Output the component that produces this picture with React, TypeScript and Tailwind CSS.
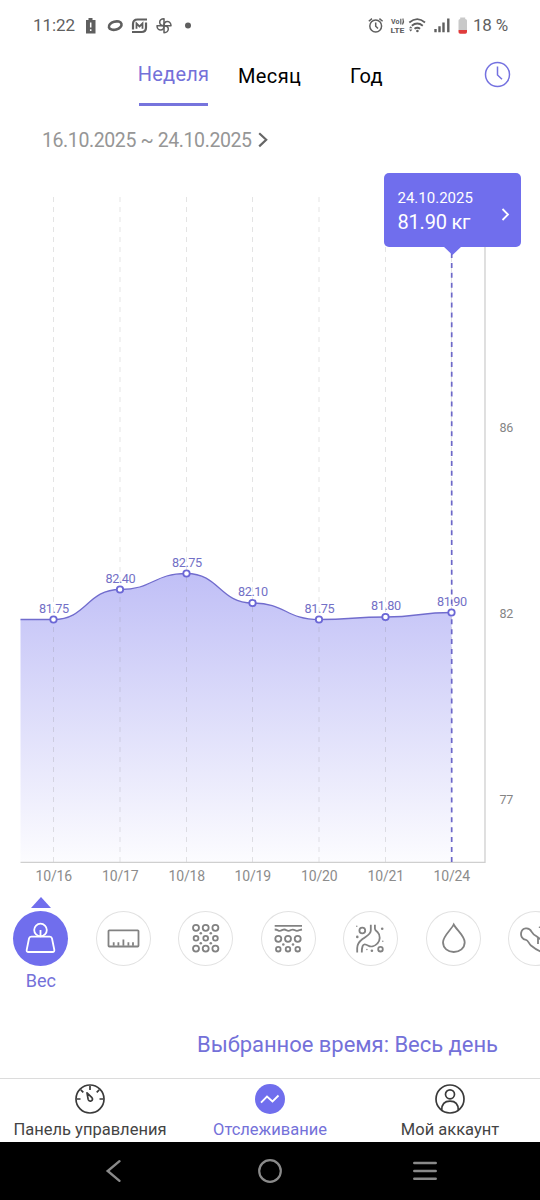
import { ReactNode } from "react";
import clsx from "clsx";

interface Point {
  x: number;
  y: number;
  value: string;
  date: string;
}

const points: Point[] = [
  { x: 53.5, y: 619.5, value: "81.75", date: "10/16" },
  { x: 120, y: 589.5, value: "82.40", date: "10/17" },
  { x: 186.5, y: 573.5, value: "82.75", date: "10/18" },
  { x: 252.5, y: 603, value: "82.10", date: "10/19" },
  { x: 319, y: 619.5, value: "81.75", date: "10/20" },
  { x: 385.5, y: 617, value: "81.80", date: "10/21" },
  { x: 451.5, y: 612.5, value: "81.90", date: "10/24" },
];

const scale = [
  { y: 427, label: "86" },
  { y: 613, label: "82" },
  { y: 799, label: "77" },
];

const CHART_LEFT = 20.5;
const CHART_BOTTOM = 862;

function buildLine() {
  let d = `M${CHART_LEFT} ${points[0].y} L${points[0].x} ${points[0].y}`;
  for (let i = 1; i < points.length; i++) {
    const a = points[i - 1];
    const b = points[i];
    const mid = (a.x + b.x) / 2;
    d += ` C${mid} ${a.y} ${mid} ${b.y} ${b.x} ${b.y}`;
  }
  return d;
}

function StatusBar() {
  return (
    <div className="flex h-[50px] shrink-0 items-center justify-between pl-[33px] pr-[32px] pt-[2px] text-[#5f5f5f]">
      <div className="flex items-center">
        <span className="w-[52px] text-[17px] tracking-[-0.1px]">11:22</span>
        <svg className="h-[18px] w-[112px]" viewBox="85 17 112 18" fill="none">
          {/* battery alert */}
          <path d="M86 20h2.500v-2h4v2H95.500v13.500H86z" fill="#5f5f5f" />
          <path d="M90.700 22.500v5M90.700 29.300v1.800" stroke="#fff" strokeWidth="1.500" />
          {/* ring */}
          <ellipse cx="115.200" cy="25.600" rx="6.500" ry="4" transform="rotate(-16 115.200 25.600)" stroke="#5f5f5f" strokeWidth="2.600" />
          {/* M badge */}
          <path d="M133 29.500v-5.500q0-4.500 4.500-4.500h9.500M146 22.500v5q0 4.500-4.500 4.500h-9.500" stroke="#5f5f5f" strokeWidth="2.200" />
          <path d="M136.500 28.800v-5.300l3 3 3-3v5.300" stroke="#5f5f5f" strokeWidth="1.800" />
          {/* pinwheel */}
          <g stroke="#5f5f5f" strokeWidth="1.500" strokeLinejoin="round">
            {[0, 90, 180, 270].map((r) => (
              <path
                key={r}
                transform={`rotate(${r} 164 25.700)`}
                d="M164 25.700v-7c-3 0-4.300 2-4.300 3.600 0 2 1.500 3.400 4.300 3.400z"
              />
            ))}
          </g>
          <circle cx="188" cy="25.600" r="3" fill="#5f5f5f" />
        </svg>
      </div>
      <div className="flex items-center gap-[5px]">
        <svg className="h-[20px] w-[100px]" viewBox="368 16 100 20" fill="none" stroke="#5f5f5f">
          {/* alarm */}
          <circle cx="375.700" cy="26" r="5.900" strokeWidth="1.500" />
          <path d="M375.700 22.500v3.700l2.300 2.300M368.800 21.300l3.200-2.700M382.600 21.300l-3.200-2.700" strokeWidth="1.500" />
          <g fill="#5f5f5f" stroke="none" fontFamily="Roboto" fontWeight="700">
            <text x="391" y="24.300" fontSize="7" textLength="8.500" lengthAdjust="spacingAndGlyphs">Vo</text>
            <text x="390.500" y="32.700" fontSize="7.500" textLength="14" lengthAdjust="spacingAndGlyphs">LTE</text>
          </g>
          <path d="M400.800 18.800v5.600M402.800 18.500q1.500 3-.3 6" strokeWidth="1.200" />
          {/* wifi */}
          <path d="M409.300 22.500q8-6.700 15.700 0M411.800 25.800q5.400-4.500 11 0M414.500 28.800q2.800-2.200 5.600 0" strokeWidth="1.800" />
          <circle cx="417.400" cy="31" r="1.300" fill="#5f5f5f" stroke="none" />
          <path d="M409 28.200l1.700-2 1.700 2zM409 29.500l1.700 2 1.700-2z" fill="#5f5f5f" stroke="none" />
          {/* signal */}
          <path d="M435.500 29v3.200M439.500 26.300v5.900M443.500 22.500v9.700M448.300 18.500v13.700" strokeWidth="2.400" />
          {/* battery */}
          <path d="M458.500 20.500q0-1.500 1.700-1.500v-1.500h5V19q1.800 0 1.800 1.500V30h-8.500z" fill="#c9c9c9" stroke="none" />
          <path d="M458.500 30h8.500v2q0 1.700-1.700 1.700h-5.100q-1.700 0-1.700-1.700z" fill="#e03c3c" stroke="none" />
        </svg>
        <span className="text-[17px] tracking-[-0.2px]">18 %</span>
      </div>
    </div>
  );
}

function PeriodTabs() {
  return (
    <div className="flex h-[60px] shrink-0 items-start pl-[138px] pr-[29px] text-[20px] text-black">
      <div className="flex h-[56px] w-[71px] flex-col items-center justify-between">
        <span className="mt-[9px] leading-[30px] tracking-[0.25px] text-[#7471d9]">Неделя</span>
        <span className="h-[3px] w-[69px] bg-[#7674dd]" />
      </div>
      <span className="ml-[29px] mt-[11px] w-[112px] leading-[30px] tracking-[0.4px]">Месяц</span>
      <span className="mt-[11px] leading-[30px] tracking-[0.2px]">Год</span>
      <svg className="ml-auto mt-[11px] size-[27px]" viewBox="0 0 27 27" fill="none" stroke="#7471e0" strokeWidth="1.500">
        <circle cx="13.500" cy="13.500" r="12" />
        <path d="M13.500 5.500v8.500l4.500 4.200" />
      </svg>
    </div>
  );
}

function DateRange() {
  return (
    <div className="flex h-[60px] shrink-0 items-center gap-[6px] pl-[42px] pt-px text-[19.5px] text-[#969696]">
      <span className="tracking-[-0.4px]">16.10.2025 ~ 24.10.2025</span>
      <svg className="mb-[2px] h-4 w-[10px]" viewBox="0 0 10 16" fill="none" stroke="#666" strokeWidth="2.200">
        <path d="M1.200 1.200L8.200 7.800 1.200 14.400" />
      </svg>
    </div>
  );
}

function WeightChart() {
  const line = buildLine();

  return (
    <div className="relative h-[720px] shrink-0">
      <svg className="block h-[720px] w-[540px]" viewBox="0 170 540 720" fontFamily="Roboto">
        <defs>
          <linearGradient id="area" x1="0" y1="573" x2="0" y2="862" gradientUnits="userSpaceOnUse">
            <stop offset="0" stopColor="#706eeb" stopOpacity="0.440" />
            <stop offset="1" stopColor="#706eeb" stopOpacity="0.020" />
          </linearGradient>
        </defs>
        <path d={`${line} V${CHART_BOTTOM} H${CHART_LEFT}Z`} fill="url(#area)" />
        {points.map((p) => (
          <path key={p.date} d={`M${p.x} 197V862`} stroke="#777" strokeOpacity="0.200" strokeDasharray="5 5" />
        ))}
        <path d="M20.500 862.300H485V197" fill="none" stroke="#cfcfcf" strokeWidth="1.300" />
        <path d="M451.700 253V862" stroke="#6c67c8" strokeWidth="1.700" strokeDasharray="5 4.900" />
        <path d={line} fill="none" stroke="#716ccd" strokeWidth="1.300" />
        {points.map((p) => (
          <g key={p.date} textAnchor="middle">
            <circle cx={p.x} cy={p.y} r="3.200" fill="#fff" stroke="#6b67d6" strokeWidth="1.800" />
            <text x={p.x + 0.4} y={p.y - 7} fill="#7370c6" fontSize="12.700" letterSpacing="-0.450">
              {p.value}
            </text>
            <text x={p.x + 0.2} y="880.500" fill="#8c8c8c" fontSize="14" letterSpacing="-0.200">
              {p.date}
            </text>
          </g>
        ))}
        {scale.map((s) => (
          <text key={s.label} x="499.500" y={s.y + 4.5} fill="#858585" fontSize="12.500" letterSpacing="-0.200">
            {s.label}
          </text>
        ))}
      </svg>

      <div className="absolute left-[383.5px] top-[3px] flex h-[73.5px] w-[137.5px] items-center justify-between rounded-[5px] bg-[#706eed] pl-[14px] pr-[11px] text-white">
        <div className="pt-[3px]">
          <p className="text-[15px] leading-[22px]">24.10.2025</p>
          <p className="text-[20px] leading-[26px] tracking-[-0.2px]">81.90 кг</p>
        </div>
        <svg className="mt-[9px] h-[13px] w-[9px]" viewBox="0 0 9 13" fill="none" stroke="#fff" strokeWidth="1.800">
          <path d="M1.500 1l5.500 5.500L1.500 12" />
        </svg>
        <svg className="absolute left-[59px] top-[73px] h-[9px] w-[19px]" viewBox="0 0 19 9">
          <path d="M0 0h19L9.500 9z" fill="#706eed" />
        </svg>
      </div>
    </div>
  );
}

const metrics: { id: string; label?: string; icon: ReactNode }[] = [
  {
    id: "weight",
    label: "Вес",
    icon: (
      <>
        <circle cx="27.500" cy="19" r="6.300" />
        <path d="M27.500 19v6" />
        <path d="M18.200 25.700h18.600q1.800 0 2.200 1.800l2.300 11.300q.4 2.200-1.800 2.200h-24q-2.200 0-1.800-2.200L16 27.500q.4-1.800 2.200-1.800z" />
      </>
    ),
  },
  {
    id: "bmi",
    icon: (
      <>
        <rect x="12.500" y="19.300" width="30" height="16.200" rx="0.800" />
        <path d="M17.700 31.300v3.500M22.400 31.300v3.500M27.400 28.500v6.300M32.400 31.300v3.500M37 31.300v3.500" />
      </>
    ),
  },
  {
    id: "fat",
    icon: (
      <>
        {[18, 27.7, 37.4].map((x) => (
          <g key={x}>
            <circle cx={x} cy="16.800" r="3" />
            <circle cx={x} cy="27.200" r="2.400" />
            <circle cx={x} cy="37.600" r="3" />
          </g>
        ))}
        <g fill="#858585" stroke="none">
          <circle cx="22.800" cy="22.200" r="1.300" />
          <circle cx="32.800" cy="22.200" r="1.300" />
          <circle cx="22.800" cy="32.200" r="1.300" />
          <circle cx="32.800" cy="32.200" r="1.300" />
        </g>
      </>
    ),
  },
  {
    id: "subcutaneous",
    icon: (
      <>
        <path d="M13.700 14.800h27.300M13.700 18.500q2 0 3.500 1t4.300-.6q2-.9 4 .4t4.500-.3q2-1 4 .3t4.500-.3l2.500-.5" />
        {[17.3, 27, 36.7].map((x) => (
          <g key={x}>
            <circle cx={x} cy="27.800" r="3" />
            <circle cx={x} cy="38.200" r="2.300" />
          </g>
        ))}
        <circle cx="22.300" cy="33.500" r="1.300" fill="#858585" stroke="none" />
        <circle cx="32" cy="33.500" r="1.300" fill="#858585" stroke="none" />
      </>
    ),
  },
  {
    id: "visceral",
    icon: (
      <>
        <circle cx="19.300" cy="19.500" r="2.900" />
        <circle cx="37.500" cy="38.200" r="2.300" />
        <path d="M27.800 13.800v5.700c0 4-4 5.300-8.300 8.500-3.800 3-5.300 5.500-5.300 9v4.500" />
        <path d="M31.900 13.800v3.700c0 2 1.200 2.300 2.700 3.700 3 3 2.700 8.300-.2 11.300-2.400 2.600-6.200 3.800-9 2.200-3.200-1.900-4.900-2-5.800.4-.6 1.600-.8 3.700-.8 6.400" />
        <g fill="#858585" stroke="none">
          <circle cx="39.200" cy="17.800" r="1.300" />
          <circle cx="14.300" cy="25.900" r="1.300" />
          <circle cx="28.900" cy="39.800" r="1.300" />
          <circle cx="13.800" cy="15.200" r="0.700" />
          <circle cx="39.800" cy="30.200" r="0.700" />
          <circle cx="23.900" cy="38.500" r="0.700" />
        </g>
      </>
    ),
  },
  {
    id: "water",
    icon: <path d="M27.700 13.500C25.500 18.500 17 25 17 31.300c0 5.800 4.900 9.700 10.800 9.700s10.900-3.900 10.900-9.700c0-6.300-8.500-12.800-11-17.800z" />,
  },
  {
    id: "muscle",
    icon: (
      <>
        <path d="M33 28.500l-4.500-3.200c-3.500-2-3.700-2.300-5-4.700-2.600-5-9.300-3.800-10.300.9-.7 3.300.8 6.800 4.800 7.300 2.200.4 2.500 3.500 5 5.700C26 37 29 39.500 34 41M30 26v7" />
        <circle cx="31.500" cy="16.300" r="0.800" fill="#858585" stroke="none" />
      </>
    ),
  },
];

function MetricPicker() {
  return (
    <div className="flex h-[120px] shrink-0 gap-[27.5px] overflow-hidden pl-[13.4px] pt-[7px]">
      {metrics.map((m) => {
        const active = m.id === "weight";
        return (
          <div key={m.id} className="flex w-[55px] shrink-0 flex-col items-center">
            <svg className={clsx("mb-[3px] h-[11px] w-[20px] shrink-0", !active && "invisible")} viewBox="0 0 20 11">
              <path d="M0 11h20L10 0z" fill="#706eed" />
            </svg>
            <div
              className={clsx(
                "size-[55px] shrink-0 rounded-full",
                active ? "bg-[#706eed]" : "shadow-[inset_0_0_0_1px_#e2e2e2]"
              )}
            >
              <svg
                className="size-[55px]"
                viewBox="0 0 55 55"
                fill="none"
                stroke={active ? "#fff" : "#828282"}
                strokeWidth="1.800"
              >
                {m.icon}
              </svg>
            </div>
            {m.label && <span className="mt-[2px] text-[18px] leading-[26px] text-[#7471d9]">{m.label}</span>}
          </div>
        );
      })}
    </div>
  );
}

function BottomNav() {
  return (
    <div className="grid h-[64px] shrink-0 grid-cols-3 border-t border-[#dcdcdc] text-[16.5px] text-[#444]">
      <div className="flex flex-col items-center pt-[5px]">
        <svg className="size-[30px]" viewBox="0 0 30 30" fill="none" stroke="#3a3a3a" strokeWidth="1.700">
          <circle cx="15" cy="15" r="14" />
          <path d="M15 2v4M2 15h3.500M24.500 15H28M5.800 5.800l2.500 2.500M24.200 5.800l-2.500 2.500" />
          <path d="M12 8.800l4.700 4.500c1.400 1.500.9 3.200-.6 3.700-1.400.5-2.700-.3-3-1.800z" strokeLinejoin="round" />
        </svg>
        <span className="mt-[5px] whitespace-nowrap leading-[22px]">Панель управления</span>
      </div>
      <div className="flex flex-col items-center pt-[5px] text-[#7471d9]">
        <svg className="size-[30px]" viewBox="0 0 30 30" fill="none">
          <circle cx="15" cy="15" r="15" fill="#706eed" />
          <path d="M6 18.700l6-6.200 5.500 5 6-6" stroke="#fff" strokeWidth="1.800" />
        </svg>
        <span className="mt-[5px] leading-[22px]">Отслеживание</span>
      </div>
      <div className="flex flex-col items-center pt-[5px]">
        <svg className="size-[30px]" viewBox="0 0 30 30" fill="none" stroke="#3a3a3a" strokeWidth="1.700">
          <circle cx="15" cy="15" r="14" />
          <circle cx="15" cy="10.300" r="4.500" />
          <path d="M6.700 26.200c0-6 3.400-9 8.300-9s8.300 3 8.300 9" />
        </svg>
        <span className="mt-[5px] leading-[22px]">Мой аккаунт</span>
      </div>
    </div>
  );
}

function SystemNav() {
  return (
    <div className="flex h-[58px] shrink-0 items-center bg-black pb-px">
      <svg className="ml-[105px] h-[24px] w-[18px]" viewBox="0 0 18 24" fill="none" stroke="#8a8a8a" strokeWidth="2.400" strokeLinecap="round">
        <path d="M14.500 2.200L2.700 12l11.800 9.800" />
      </svg>
      <svg className="ml-[135px] size-[24px]" viewBox="0 0 24 24" fill="none" stroke="#8a8a8a" strokeWidth="2.200">
        <circle cx="12" cy="12" r="10.800" />
      </svg>
      <svg className="ml-[131px] h-[20px] w-[24px]" viewBox="0 0 24 20" stroke="#8a8a8a" strokeWidth="2.500" strokeLinecap="round">
        <path d="M1.300 2h21.400M1.300 10h21.400M1.300 17.700h21.400" />
      </svg>
    </div>
  );
}

export default function App() {
  return (
    <div className="flex h-[1200px] w-[540px] flex-col overflow-hidden bg-white font-['Roboto',sans-serif]">
      <StatusBar />
      <PeriodTabs />
      <DateRange />
      <WeightChart />
      <MetricPicker />
      <div className="flex h-[68px] shrink-0 items-center justify-end pr-[42px] text-[22px] tracking-[-0.03px] text-[#7471d9]">
        Выбранное время: Весь день
      </div>
      <BottomNav />
      <SystemNav />
    </div>
  );
}
